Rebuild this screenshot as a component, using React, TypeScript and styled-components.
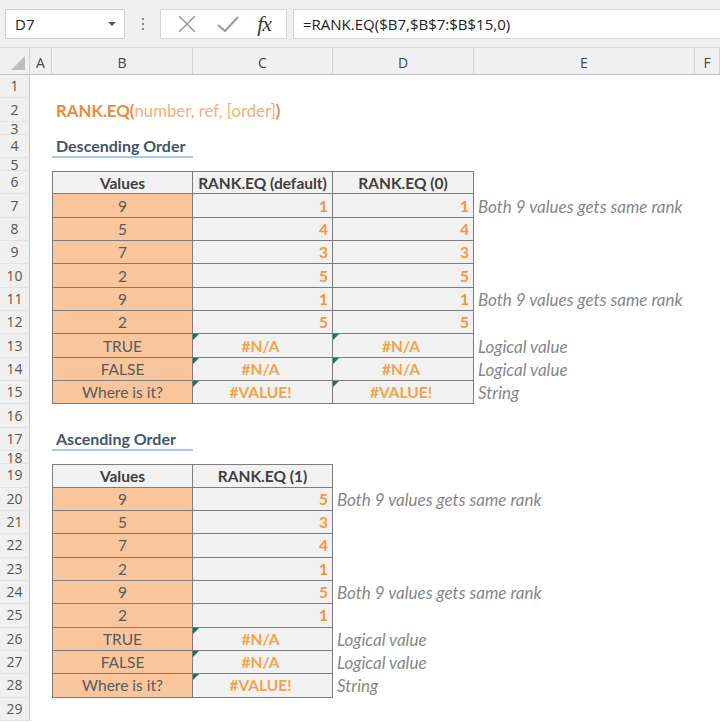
import styled, { createGlobalStyle } from "styled-components";

const GlobalStyle = createGlobalStyle`
  * { box-sizing: border-box; }
  body {
    margin: 0;
    background: #ffffff;
    font-family: "Open Sans", "Noto Sans", sans-serif;
  }
`;

const COLS = "30px 22px 141px 140px 141px 221px 1fr";
const ROW_H = 23.35;
const THIN_H = 13;
const CELL_FONT = `Lato, "Open Sans", sans-serif`;

type DescRow = { n: number; v: string; a: string; b: string; note?: string; err?: boolean };
type AscRow = { n: number; v: string; r: string; note?: string; err?: boolean };

const descRows: DescRow[] = [
  { n: 7, v: "9", a: "1", b: "1", note: "Both 9 values gets same rank" },
  { n: 8, v: "5", a: "4", b: "4" },
  { n: 9, v: "7", a: "3", b: "3" },
  { n: 10, v: "2", a: "5", b: "5" },
  { n: 11, v: "9", a: "1", b: "1", note: "Both 9 values gets same rank" },
  { n: 12, v: "2", a: "5", b: "5" },
  { n: 13, v: "TRUE", a: "#N/A", b: "#N/A", note: "Logical value", err: true },
  { n: 14, v: "FALSE", a: "#N/A", b: "#N/A", note: "Logical value", err: true },
  { n: 15, v: "Where is it?", a: "#VALUE!", b: "#VALUE!", note: "String", err: true },
];

const ascRows: AscRow[] = [
  { n: 20, v: "9", r: "5", note: "Both 9 values gets same rank" },
  { n: 21, v: "5", r: "3" },
  { n: 22, v: "7", r: "4" },
  { n: 23, v: "2", r: "1" },
  { n: 24, v: "9", r: "5", note: "Both 9 values gets same rank" },
  { n: 25, v: "2", r: "1" },
  { n: 26, v: "TRUE", r: "#N/A", note: "Logical value", err: true },
  { n: 27, v: "FALSE", r: "#N/A", note: "Logical value", err: true },
  { n: 28, v: "Where is it?", r: "#VALUE!", note: "String", err: true },
];

/* ---------- formula bar ---------- */

const Toolbar = styled.div`
  height: 48px;
  background: #f0f0f0;
  display: flex;
  align-items: center;
  padding-left: 5px;
  border-bottom: 1px solid #dadada;
`;

const NameBox = styled.div`
  width: 120px;
  height: 30px;
  background: #ffffff;
  border: 1px solid #cfcfcf;
  display: flex;
  align-items: center;
  justify-content: space-between;
  padding: 0 8px 0 9px;
  font-size: 15px;
  color: #222;
`;

const DropArrow = styled.span`
  width: 0;
  height: 0;
  border-left: 4px solid transparent;
  border-right: 4px solid transparent;
  border-top: 4px solid #555;
`;

const Grip = styled.div`
  width: 35px;
  display: flex;
  flex-direction: column;
  align-items: center;
  gap: 3px;
  & > span {
    width: 2px;
    height: 2px;
    background: #8a8a8a;
  }
`;

const ActionBox = styled.div`
  width: 127px;
  height: 30px;
  background: #ffffff;
  border: 1px solid #d6d6d6;
  display: flex;
  align-items: center;
  justify-content: space-around;
  padding: 0 6px;
`;

const Fx = styled.span`
  font-family: "Liberation Serif", "DejaVu Serif", serif;
  font-style: italic;
  font-size: 22px;
  color: #3a3a3a;
  letter-spacing: -1px;
`;

const FormulaInput = styled.div`
  flex: 1;
  height: 30px;
  margin-left: 6px;
  background: #ffffff;
  border: 1px solid #d6d6d6;
  border-right: none;
  display: flex;
  align-items: center;
  padding-left: 9px;
  font-size: 15px;
  color: #222;
`;

/* ---------- grid ---------- */

const Sheet = styled.div`
  display: flex;
  flex-direction: column;
`;

const Row = styled.div<{ $h: number }>`
  display: grid;
  grid-template-columns: ${COLS};
  height: ${(p) => p.$h}px;
`;

const ColumnHeadRow = styled.div`
  display: grid;
  grid-template-columns: ${COLS};
  height: 27px;
  background: #f0f0f0;
  border-bottom: 1px solid #c4c4c4;
`;

const Corner = styled.div`
  position: relative;
  border-right: 1px solid #d0d0d0;
  &::after {
    content: "";
    position: absolute;
    right: 4px;
    bottom: 4px;
    width: 0;
    height: 0;
    border-left: 14px solid transparent;
    border-bottom: 14px solid #bdbdbd;
  }
`;

const ColumnHead = styled.div`
  display: flex;
  align-items: center;
  justify-content: center;
  font-size: 14px;
  color: #444;
  border-right: 1px solid #d4d4d4;
  padding-top: 2px;
`;

const RowHead = styled.div<{ $thin?: boolean }>`
  background: #f0f0f0;
  border-right: 1px solid #c8c8c8;
  border-bottom: 1px solid #e2e2e2;
  display: flex;
  align-items: ${(p) => (p.$thin ? "flex-start" : "center")};
  justify-content: center;
  font-size: 14px;
  color: #555;
  overflow: hidden;
  line-height: 1;
`;

const Blank = styled.div``;

const Title = styled.div`
  grid-column: span 4;
  display: flex;
  align-items: center;
  padding-left: 4px;
  font-family: ${CELL_FONT};
  font-size: 16.8px;
  white-space: nowrap;
  color: #ec8a3c;
  font-weight: 700;
  & > span {
    font-weight: 400;
    color: #f3b07c;
  }
`;

const Heading = styled.div`
  display: flex;
  align-items: center;
  padding: 1px 0 0 4px;
  font-family: ${CELL_FONT};
  font-size: 16px;
  font-weight: 700;
  color: #44546a;
  border-bottom: 2px solid #a7c9e8;
  white-space: nowrap;
`;

const TableCell = styled.div<{ $first?: boolean; $top?: boolean }>`
  position: relative;
  display: flex;
  align-items: center;
  font-family: ${CELL_FONT};
  font-size: 15.5px;
  white-space: nowrap;
  border-right: 1px solid #7d7d7d;
  border-bottom: 1px solid #7d7d7d;
  border-left: ${(p) => (p.$first ? "1px solid #7d7d7d" : "none")};
  border-top: ${(p) => (p.$top ? "1px solid #7d7d7d" : "none")};
`;

const HeadCell = styled(TableCell)`
  background: #f2f2f2;
  justify-content: center;
  font-weight: 700;
  color: #3f3f3f;
`;

const ValueCell = styled(TableCell)`
  background: #f8c59c;
  justify-content: center;
  color: #5a5a5a;
`;

const RankCell = styled(TableCell)<{ $err?: boolean }>`
  background: #f1f1f1;
  justify-content: ${(p) => (p.$err ? "center" : "flex-end")};
  padding-right: 4px;
  font-weight: 700;
  color: ${(p) => (p.$err ? "#f2a449" : "#f0973f")};
  &::before {
    content: "";
    display: ${(p) => (p.$err ? "block" : "none")};
    position: absolute;
    top: 0;
    left: 0;
    width: 0;
    height: 0;
    border-top: 6px solid #217346;
    border-right: 6px solid transparent;
  }
`;

const Note = styled.div`
  display: flex;
  align-items: center;
  padding-left: 4px;
  font-family: ${CELL_FONT};
  font-size: 17px;
  font-style: italic;
  color: #878787;
  white-space: nowrap;
`;

const XIcon = () => (
  <svg width="22" height="22" viewBox="0 0 22 22">
    <path d="M3 3 L19 19 M19 3 L3 19" stroke="#9a9a9a" strokeWidth="1.6" fill="none" />
  </svg>
);

const CheckIcon = () => (
  <svg width="24" height="22" viewBox="0 0 24 22">
    <path d="M2 12 L9 18 L22 4" stroke="#9a9a9a" strokeWidth="2" fill="none" />
  </svg>
);

const Dots = () => (
  <Grip>
    <span />
    <span />
    <span />
  </Grip>
);

const App = () => {
  return (
    <>
      <GlobalStyle />
      <Toolbar>
        <NameBox>
          D7
          <DropArrow />
        </NameBox>
        <Dots />
        <ActionBox>
          <XIcon />
          <CheckIcon />
          <Fx>fx</Fx>
        </ActionBox>
        <FormulaInput>=RANK.EQ($B7,$B$7:$B$15,0)</FormulaInput>
      </Toolbar>

      <Sheet>
        <ColumnHeadRow>
          <Corner />
          {["A", "B", "C", "D", "E", "F"].map((c) => (
            <ColumnHead key={c}>{c}</ColumnHead>
          ))}
        </ColumnHeadRow>

        <Row $h={ROW_H}>
          <RowHead>1</RowHead>
        </Row>
        <Row $h={ROW_H}>
          <RowHead>2</RowHead>
          <Blank />
          <Title>
            RANK.EQ(<span>number, ref, [order]</span>)
          </Title>
        </Row>
        <Row $h={THIN_H}>
          <RowHead $thin>3</RowHead>
        </Row>
        <Row $h={ROW_H}>
          <RowHead>4</RowHead>
          <Blank />
          <Heading>Descending Order</Heading>
        </Row>
        <Row $h={THIN_H}>
          <RowHead $thin>5</RowHead>
        </Row>
        <Row $h={ROW_H}>
          <RowHead>6</RowHead>
          <Blank />
          <HeadCell $first $top>Values</HeadCell>
          <HeadCell $top>RANK.EQ (default)</HeadCell>
          <HeadCell $top>RANK.EQ (0)</HeadCell>
        </Row>
        {descRows.map((r) => (
          <Row $h={ROW_H} key={r.n}>
            <RowHead>{r.n}</RowHead>
            <Blank />
            <ValueCell $first>{r.v}</ValueCell>
            <RankCell $err={r.err}>{r.a}</RankCell>
            <RankCell $err={r.err}>{r.b}</RankCell>
            <Note>{r.note}</Note>
          </Row>
        ))}
        <Row $h={ROW_H}>
          <RowHead>16</RowHead>
        </Row>
        <Row $h={ROW_H}>
          <RowHead>17</RowHead>
          <Blank />
          <Heading>Ascending Order</Heading>
        </Row>
        <Row $h={THIN_H}>
          <RowHead $thin>18</RowHead>
        </Row>
        <Row $h={ROW_H}>
          <RowHead>19</RowHead>
          <Blank />
          <HeadCell $first $top>Values</HeadCell>
          <HeadCell $top>RANK.EQ (1)</HeadCell>
        </Row>
        {ascRows.map((r) => (
          <Row $h={ROW_H} key={r.n}>
            <RowHead>{r.n}</RowHead>
            <Blank />
            <ValueCell $first>{r.v}</ValueCell>
            <RankCell $err={r.err}>{r.r}</RankCell>
            <Note>{r.note}</Note>
          </Row>
        ))}
        <Row $h={ROW_H}>
          <RowHead>29</RowHead>
        </Row>
      </Sheet>
    </>
  );
};

export default App;
